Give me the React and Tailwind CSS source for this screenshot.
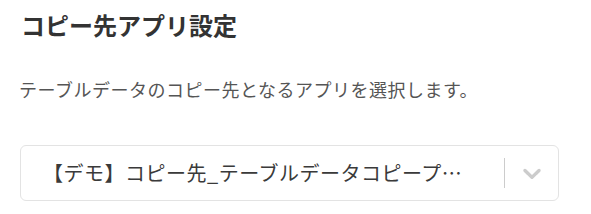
import React from "react";

export default function App() {
  return (
    <div className="w-[591px] h-[214px] bg-white pl-[21px] pr-[32px] pt-[7px]" style={{ fontFamily: '"Noto Sans CJK JP", "Noto Sans", sans-serif' }}>
      <h2 className="text-[24px] leading-[36px] font-bold text-[#333333]">コピー先アプリ設定</h2>
      <p className="mt-[33px] -ml-[2px] text-[18px] leading-[27px] tracking-[0.5px] text-[#555555]">テーブルデータのコピー先となるアプリを選択します。</p>
      <div className="mt-[42px] -ml-px flex h-[56px] w-[539px] items-center rounded-[6px] border border-[#e3e3e3] bg-white">
        <div className="min-w-0 flex-1 pl-[22px] pr-[26px] text-[20px] leading-[28px] tracking-[0.5px] text-[#3a3a3a] whitespace-nowrap overflow-hidden text-ellipsis">
          【デモ】コピー先_テーブルデータコピープロジェクト一覧
        </div>
        <div className="flex items-center self-stretch py-[12px]">
          <span className="w-px self-stretch bg-[#cccccc]" />
          <div className="flex w-[53px] items-center justify-center">
            <svg width="30" height="30" viewBox="0 0 20 20" fill="#cccccc" aria-hidden="true">
              <path d="M4.516 7.548c0.436-0.446 1.043-0.481 1.576 0l3.908 3.747 3.908-3.747c0.533-0.481 1.141-0.446 1.574 0 0.436 0.445 0.408 1.197 0 1.615-0.406 0.418-4.695 4.502-4.695 4.502-0.217 0.223-0.502 0.335-0.787 0.335s-0.57-0.112-0.789-0.335c0 0-4.287-4.084-4.695-4.502s-0.436-1.17 0-1.615z" />
            </svg>
          </div>
        </div>
      </div>
    </div>
  );
}
